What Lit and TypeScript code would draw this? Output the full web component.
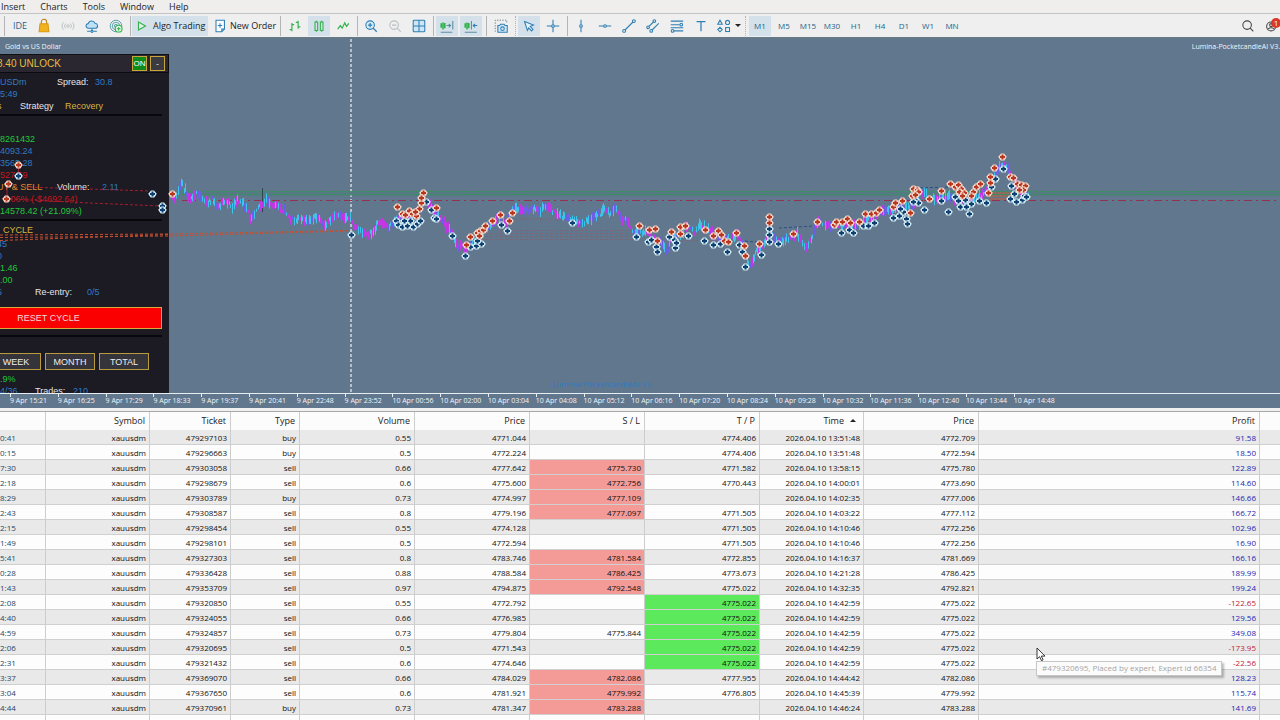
import { LitElement, html, css, svg } from "lit";
import { customElement } from "lit/decorators.js";
import { classMap } from "lit/directives/class-map.js";

type Pt = [number, number];

const BLUE = "#2f7fb4";
const GREEN = "#2fb24a";

const pairs = (s: string): Pt[] =>
  s.trim().split(/\s+/).map((p) => p.split(",").map(Number) as Pt);

const PRICE = pairs(`172,199 175,200 181,184 185,190 189,197 194,194 200,196 206,203 212,200 217,207 223,203
229,202 231,208 237,200 243,204 250,217 257,209 262,205 266,200 272,205 278,207 285,212 291,220 300,217
308,222 315,217 325,225 335,216 344,218 350,216 353,224 358,231 365,233 372,234 379,220 387,228 393,223
400,217 408,220 418,212 423,200 430,205 440,218 450,231 457,246 463,247 467,250 472,243 478,240 485,230
495,222 502,214 506,224 511,210 518,210 524,211 532,208 540,210 545,205 552,211 560,216 567,216 573,222
585,222 595,217 604,210 609,213 616,208 621,219 628,222 634,233 641,231 650,235 656,240 660,243 667,251
671,237 682,233 688,225 694,231 700,225 712,233 720,238 730,240 736,233 743,246 749,268 753,258 758,248
765,243 770,230 777,243 787,238 797,234 806,247 811,240 817,223 825,224 835,227 845,224 855,226 865,220
875,215 885,212 895,208 905,207 912,205 920,192 930,198 940,198 950,196 960,203 970,200 980,197 990,188
995,172 1003,165 1008,170 1012,178 1020,190 1028,193`);

const SELLS = pairs(`18,165 8,184 6,199 172,194 397,207 402,214 405,215 409,211 412,214 416,216 419,209
421,203 423,193 421,198 415,212 436,208 466,245 470,237 477,233 480,231 483,230 479,236 485,226 492,221
500,215 509,221 512,213 639,226 649,230 655,229 657,241 671,232 680,227 685,226 680,234 705,230 713,236
718,231 721,235 724,241 728,242 736,233 744,246 745,256 769,217 769,223 759,244 793,234 817,222 834,225
836,222 842,222 847,219 850,223 859,222 865,214 871,214 876,213 879,210 893,207 895,203 902,201 910,213
913,189 917,190 918,192 912,196 915,195 929,199 941,191 950,184 955,187 958,185 961,189 959,192 964,193
962,196 973,192 976,187 980,184 971,196 988,193 990,177 994,168 1002,157 990,183 1010,177 1013,178
1017,184 1021,185 1025,186 1023,190 1019,190`);

const BUYS = pairs(`18,176 152,194 162,206 162,210 351,235 396,221 398,225 402,227 407,226 413,227 417,224
420,221 410,221 404,221 426,202 431,210 434,218 436,219 452,236 465,256 470,247 476,246 481,244 477,241
501,225 507,231 572,223 636,237 648,242 651,240 656,247 657,252 675,248 674,240 669,237 676,243 688,236
704,241 713,245 720,244 727,252 739,245 742,252 745,267 769,229 769,235 769,242 761,255 778,244 841,233
849,230 853,233 863,226 868,226 874,223 893,218 899,216 903,212 906,219 907,224 900,209 915,200 918,203
913,202 924,210 941,201 948,212 955,197 958,201 960,207 966,207 969,214 971,204 979,201 986,203 965,200
995,179 1003,169 991,187 1011,186 1010,199 1016,202 1022,200 1024,196 1014,194 1026,197`);

/* Deterministic noise keeps the candles identical on every render. */
function candles() {
  let seed = 11;
  const rnd = () => ((seed = (seed * 16807) % 2147483647) / 2147483647);
  const tone = ["#c436e6", "#3ec3ea", "#6a5fe6"];
  const groups: string[] = ["", "", ""];
  let k = 0;
  for (let x = 172; x <= 1028; x += 1) {
    while (k < PRICE.length - 2 && PRICE[k + 1][0] < x) k++;
    const [x0, y0] = PRICE[k];
    const [x1, y1] = PRICE[k + 1];
    const y = y0 + ((y1 - y0) * (x - x0)) / (x1 - x0) + (rnd() - 0.5) * 5;
    const h = 1.5 + rnd() * 4;
    const r = rnd();
    const slope = y1 - y0;
    const c = r < 0.25 ? 2 : r < (slope > 0 ? 0.78 : 0.5) ? 0 : 1;
    groups[c] += `M${x + 0.5} ${(y - h).toFixed(1)}V${(y + h).toFixed(1)}`;
  }
  return groups.map((d, i) => svg`<path d=${d} stroke=${tone[i]} stroke-width="1" fill="none"/>`);
}

const marker = (fill: string, ring: string) => ([x, y]: Pt) => svg`
  <g transform="translate(${x + 0.5} ${y})">
    <path d="M-1.500-3.500H1.500L3.800-.8V.8L1.800 3.500H-1.800L-3.800.8V-.8Z" fill=${ring}/>
    <path d="M-1-2.400H1V-1H2.500V1H1V2.400H-1V1H-2.500V-1H-1Z" fill=${fill}/>
  </g>`;

const TIMES = ["9 Apr 15:21", "9 Apr 16:25", "9 Apr 17:29", "9 Apr 18:33", "9 Apr 19:37", "9 Apr 20:41",
  "9 Apr 22:48", "9 Apr 23:52", "10 Apr 00:56", "10 Apr 02:00", "10 Apr 03:04", "10 Apr 04:08",
  "10 Apr 05:12", "10 Apr 06:16", "10 Apr 07:20", "10 Apr 08:24", "10 Apr 09:28", "10 Apr 10:32",
  "10 Apr 11:36", "10 Apr 12:40", "10 Apr 13:44", "10 Apr 14:48"];

/* open time | ticket | type | volume | price | S/L | T/P | close time | close price | profit */
const DEALS = `0:41|479297103|buy|0.55|4771.044||4774.406|13:51:48|4772.709|91.58
0:15|479296663|buy|0.5|4772.224||4774.406|13:51:48|4772.594|18.50
7:30|479303058|sell|0.66|4777.642|4775.730*|4771.582|13:58:15|4775.780|122.89
2:18|479298679|sell|0.6|4775.600|4772.756*|4770.443|14:00:01|4773.690|114.60
8:29|479303789|buy|0.73|4774.997|4777.109*||14:02:35|4777.006|146.66
2:43|479308587|sell|0.8|4779.196|4777.097*|4771.505|14:03:22|4777.112|166.72
2:15|479298454|sell|0.55|4774.128||4771.505|14:10:46|4772.256|102.96
1:49|479298101|sell|0.5|4772.594||4771.505|14:10:46|4772.256|16.90
5:41|479327303|sell|0.8|4783.746|4781.584*|4772.855|14:16:37|4781.669|166.16
0:28|479336428|sell|0.88|4788.584|4786.425*|4773.673|14:21:28|4786.425|189.99
1:43|479353709|sell|0.97|4794.875|4792.548*|4775.022|14:32:35|4792.821|199.24
2:08|479320850|sell|0.55|4772.792||4775.022*|14:42:59|4775.022|-122.65
4:40|479324055|sell|0.66|4776.985||4775.022*|14:42:59|4775.022|129.56
4:59|479324857|sell|0.73|4779.804|4775.844|4775.022*|14:42:59|4775.022|349.08
2:06|479320695|sell|0.5|4771.543||4775.022*|14:42:59|4775.022|-173.95
2:31|479321432|sell|0.6|4774.646||4775.022*|14:42:59|4775.022|-22.56
3:37|479369070|sell|0.66|4784.029|4782.086*|4777.955|14:44:42|4782.086|128.23
3:04|479367650|sell|0.6|4781.921|4779.992*|4776.805|14:45:39|4779.992|115.74
4:44|479370961|buy|0.73|4781.347|4783.288*||14:46:24|4783.288|141.69
2:37|479367350|sell|0.55|4780.364||4776.805|14:48:08|4778.814|85.25`
  .split("\n").map((r) => r.split("|"));

const FRAMES = ["M1", "M5", "M15", "M30", "H1", "H4", "D1", "W1", "MN"];

const icon = (body: unknown) => html`<svg class="ico" viewBox="0 0 18 18" fill="none"
  stroke=${BLUE} stroke-width="1.2" aria-hidden="true">${body}</svg>`;

const I = {
  bag: svg`<path d="M6 7V4.5a3 3 0 0 1 6 0V7" stroke="#b98413"/><path d="M4.5 6.5h9l1 9h-11z" fill="#f2b21d" stroke="#d99a14"/>`,
  signal: svg`<g stroke="#b9bdc0" stroke-width="1"><circle cx="9" cy="9" r="1.4"/><path d="M6.3 6.3a4 4 0 0 0 0 5.4M11.7 6.3a4 4 0 0 1 0 5.4M4 4.8a6 6 0 0 0 0 8.4M14 4.8a6 6 0 0 1 0 8.4"/></g>`,
  cloud: svg`<path d="M5 11.5a2.6 2.6 0 0 1-.2-5.2A4 4 0 0 1 12.4 6a2.8 2.8 0 0 1 .8 5.5z" fill="#bfe0f5"/><path d="M9 11.5V15M3.5 15h4M10.500 15h4"/><circle cx="9" cy="15" r="1.200"/>`,
  radar: svg`<g stroke="#4f9aa8" stroke-width="1"><circle cx="9" cy="9" r="6.500"/><circle cx="9" cy="9" r="4.200"/><circle cx="9" cy="9" r="1.800"/></g><circle cx="12" cy="12" r="3.800" fill="#e6f7e8" stroke=${GREEN}/><path d="M12 10v4M10 12h4" stroke=${GREEN}/>`,
  play: svg`<path d="M5 4.500L13 9 5 13.500Z" stroke=${GREEN} fill="#e2f4e8"/>`,
  order: svg`<path d="M4.500 2.500h9.500v10l-3 3h-6.500z" fill="#fff"/><path d="M14 12.500h-3v3" /><path d="M9 6v5M6.500 8.500h5"/>`,
  bars: svg`<path d="M5.500 5.500V15M3 13h2.500M5.500 7.500H8M12.500 3v9M10 5h2.500M12.500 10H15" stroke=${GREEN} stroke-width="1.300"/>`,
  candle: svg`<g stroke=${GREEN}><rect x="4.500" y="4.500" width="3" height="9.500"/><rect x="10.500" y="4.500" width="3" height="9.500"/><path d="M6 3v1.500M6 14v1.500M12 3v1.500M12 14v1.500"/></g>`,
  line: svg`<path d="M3 12.500L6 8.500 8 11.500 11 5.500 13 9.500 15.500 6" stroke=${GREEN} stroke-width="1.300"/>`,
  plus: svg`<circle cx="8" cy="8" r="4.800" fill="#d7ecf9"/><path d="M11.500 11.500L15.500 15.500M8 5.700V10.300M5.700 8H10.300" stroke-width="1.400"/>`,
  minus: svg`<g stroke="#b9bec2"><circle cx="8" cy="8" r="4.800"/><path d="M11.500 11.500L15.500 15.500M5.700 8H10.300"/></g>`,
  grid: svg`<rect x="2.500" y="2.500" width="13" height="13" rx="1" fill="#cfe6f6"/><path d="M9 2.500v13M2.500 9h13"/>`,
  shift: svg`<path d="M2.500 6v5M4.500 5v8M6.500 5.500v6" stroke=${GREEN} stroke-width="1.800"/><path d="M8.500 8.500h4.500M11 6.500l2 2-2 2" stroke="#4f8f9f"/><path d="M15.500 3.500V13M2 16h13" stroke="#5d8ca0"/>`,
  scroll: svg`<path d="M2.500 6v5M4.500 5v8M6.500 5.500v6" stroke=${GREEN} stroke-width="1.800"/><path d="M9.500 3.500V13M2 16h13.500" stroke="#5d8ca0"/><path d="M16 8.500h-4.500M13.500 6.500l-2 2 2 2"/>`,
  camera: svg`<path d="M2.500 15.500V2.500h13v4" stroke="#667a86" stroke-width="1" stroke-dasharray="1.500 1.500"/><path d="M5.500 8.500h2l1-1.500h4l1 1.500h2.500v7.500h-10.500z" fill="#d2e8f7"/><circle cx="10.700" cy="12" r="2"/>`,
  cursor: svg`<path d="M4 4L14 8 10.400 9.500 13.500 12.800 11.800 14.500 8.700 11.200 7.200 14Z" fill="#e5f2fb"/>`,
  cross: svg`<path d="M9 2v5.500M9 10.500V16M2 9h5.500M10.500 9H16"/><circle cx="9" cy="9" r="1.500"/>`,
  vline: svg`<path d="M9 2v5.500M9 10.500V16"/><circle cx="9" cy="9" r="1.500"/>`,
  hline: svg`<path d="M2 9h5.500M10.500 9H16"/><circle cx="9" cy="9" r="1.500"/>`,
  trend: svg`<path d="M4.500 13.500l9-9"/><circle cx="3.500" cy="14.500" r="1.600"/><circle cx="14.500" cy="3.500" r="1.600"/>`,
  channel: svg`<path d="M4.500 9.500l5-5M8 13.500l7.500-7.500"/><circle cx="3.500" cy="10.500" r="1.500"/><circle cx="10.500" cy="3.500" r="1.500"/><circle cx="7" cy="14.500" r="1.500"/>`,
  fibo: svg`<path d="M2 3.500h14M2 7.500h10M2 11h14M5.500 14.500H16"/><circle cx="13.800" cy="7.500" r="1.500"/><circle cx="4" cy="14.500" r="1.500"/>`,
  text: svg`<path d="M4 4h10M9 4v11" stroke-width="1.400"/>`,
  shapes: svg`<path d="M4.500 2.500L7 7h-5z"/><circle cx="13" cy="5" r="2.300"/><path d="M4.500 10.500L7 13l-2.500 2.500L2 13z"/><rect x="10.800" y="10.800" width="4.400" height="4.400"/>`,
  search: svg`<circle cx="8" cy="8" r="4.800" stroke="#444"/><path d="M11.500 11.500L15 15" stroke="#444"/>`,
  account: svg`<circle cx="8" cy="9.500" r="5" stroke="#444"/><circle cx="8" cy="8" r="1.700" stroke="#444"/><path d="M4.500 12.500q3.500-3 7 0" stroke="#444"/>`,
};

@customElement("app-root")
export class AppRoot extends LitElement {
  static styles = css`
    :host { display: flex; flex-direction: column; position: relative; height: 100vh; overflow: hidden;
      background: #f0f0f0; color: #222; font: 9px/12px "Open Sans", "Noto Sans", sans-serif; }
    * { box-sizing: border-box; }
    button { font: inherit; color: inherit; border: 0; background: none; padding: 0; margin: 0; }
    .menu { display: flex; gap: 15px; height: 13px; padding-left: 1px; flex: none; background: #efeeed; }
    .bar { display: flex; align-items: center; height: 26px; flex: none; background: #eeefee; overflow: hidden;
      border-top: 1px solid #c4c4c4; border-bottom: 2px solid #647888; }
    .tool { width: 24px; height: 20px; flex: none; display: flex; align-items: center; justify-content: center;
      color: #1f628c; }
    .tool.on, .algo { background: #d5e1ea; background-clip: padding-box; border: 0 solid transparent; }
    .tool.on { border-width: 0 1px; }
    .tool.tf { font-size: 8px; }
    .ico { width: 16px; height: 16px; flex: none; }
    .algo, .new { height: 20px; display: flex; align-items: center; flex: none; white-space: nowrap; }
    .algo { width: 76px; padding-left: 2px; gap: 3px; }
    .new { width: 69px; padding-left: 4px; gap: 2px; }
    .tool.more { width: 30px; gap: 3px; }
    .caret { border: 3px solid transparent; border-top-color: #222; border-bottom: 0; }
    .sep { flex: none; height: 20px; display: flex; justify-content: center; width: 4px; }
    .sep::before { content: ""; border-left: 1px solid #b4b4b4; }
    .sep.w5 { width: 5px; }
    .sep.w6 { width: 6px; }
    .sep.w8 { width: 8px; }
    .sep.dot::before { border-left-style: dotted; }
    .grow { flex: 1; }
    .acct { position: relative; margin-right: -4px; }
    .badge { position: absolute; right: 3px; top: 2px; width: 10px; height: 10px; border-radius: 5px;
      background: #d8392b; color: #fff; font-size: 8px; line-height: 10px; text-align: center; }
    .chart { position: relative; flex: none; height: 354px; background: #61778d; overflow: hidden; }
    .caption { display: flex; justify-content: space-between; height: 15px; padding-left: 5px; color: #f2f5f8;
      font-size: 7px; line-height: 15px; white-space: nowrap; }
    .plot { position: absolute; inset: 0; width: 100%; height: 100%; pointer-events: none; }
    .panel { width: 169px; height: 339px; overflow: hidden; background: #1c1a23; color: #e6e6e6;
      font: 9px/12px "Liberation Sans", Arial, sans-serif; border-top: 1px solid #111; }
    .head { display: flex; align-items: center; height: 18px; gap: 3px; padding-right: 3px; background: #2a2730;
      border-bottom: 1px solid #0c0b10; border-right: 1px solid #0c0b10; color: #e6bd3f; }
    .head h1 { flex: 1; margin: 0 0 0 -3px; font-size: 10px; font-weight: 400; white-space: nowrap; }
    .head button { width: 15px; height: 15px; border: 1px solid #c9a63c; background: #3a3a40; color: #ddd; line-height: 12px; }
    .head .live { background: #118a1c; color: #fff; font-size: 8px; }
    .row { display: flex; height: 12px; white-space: nowrap; }
    .rows { padding: 3px 0 2px; }
    .rule { width: 162px; height: 2px; background: #08070c; }
    .c20 { width: 20px; } .c35 { width: 35px; } .c38 { width: 38px; } .c45 { width: 45px; }
    .c52 { width: 52px; } .c57 { width: 57px; }
    .b { color: #2f7cc4; } .g { color: #22c93a; } .y { color: #d8b43c; } .o { color: #e08a2c; } .r { color: #c4161c; }
    .ind { padding-left: 3px; }
    .cut { text-indent: -3px; }
    .stats { padding: 17px 0 2px; }
    .cycle { padding: 3px 0 0; }
    .cycle .first { margin-bottom: 2px; }
    .reset { display: block; width: 162px; height: 22px; margin: 9px 0 6px; padding-right: 64px; background: #fb0000;
      border: 1px solid #d9a93a; border-left: 0; color: #f3dada; }
    .periods { display: flex; gap: 4px; margin: 16px 0 3px; }
    .periods button { width: 50px; height: 17px; background: #35343b; border: 1px solid #b89b3f; color: #eee; }
    .periods button:first-child { width: 41px; border-left: 0; padding-right: 8px; }
    .axis { flex: none; height: 15px; background: #61778d; border-top: 1px solid #e8edf1; padding-left: 10px; }
    .ticks { display: grid; grid-template-columns: repeat(22, 1fr); width: 82.8%; color: #f2f5f8; font-size: 7px;
      line-height: 13px; white-space: nowrap; }
    .ticks span { position: relative; }
    .ticks span::before { content: ""; position: absolute; left: 0; top: 0; height: 3px; border-left: 1px solid #e8edf1; }
    .deals { flex: 1; min-height: 0; overflow: hidden; border-top: 3px solid #f0f0f0; background: #fdfdfd; }
    table { width: 100%; table-layout: fixed; border-collapse: separate; border-spacing: 0; border-top: 1px solid #a8a8a8; }
    th, td { padding: 0 3px 0 0; text-align: right; border-right: 1px solid #cdcdcd; white-space: nowrap; overflow: hidden; }
    th { height: 18px; padding-right: 4px; font-weight: 400; background: #fcfcfc; }
    td { height: 15px; padding-top: 2px; line-height: 12px; border-bottom: 1px solid #d0d0d0; font-size: 8px; color: #111; }
    td.start { text-align: left; color: #29455f; }
    tbody tr:nth-child(odd) { background: #e9e9e9; }
    td.sl { background: #f49b97; }
    td.tp { background: #5cea5c; }
    td.up { color: #2226b0; }
    td.down { color: #c02434; }
    td:last-child, th:last-child { border-right: 0; }
    .sort { display: inline-block; margin: 0 3px 2px 6px; border: 3px solid transparent; border-bottom-color: #222; border-top: 0; }
    .w46 { width: 46px; } .w104 { width: 104px; } .w81 { width: 81px; } .w69 { width: 69px; } .w115 { width: 115px; }
    .w20 { width: 20px; }
    .pointer { position: absolute; left: 1036px; top: 647px; width: 10px; height: 15px; }
    .tip { position: absolute; left: 1036px; top: 661px; padding: 0 5px; height: 15px; background: #fbfbfb;
      border: 1px solid #c6c6c6; box-shadow: 2px 2px 2px #0004; color: #a6a6a6; font-size: 8px; line-height: 12px; white-space: nowrap; }
  `;

  private tool(name: string, label: string, on = false) {
    return html`<button class=${classMap({ tool: true, on })} aria-label=${label}>${icon((I as any)[name])}</button>`;
  }

  private toolbar() {
    return html`<div class="bar" role="toolbar">
      <span class="sep w8"></span>
      <button class="tool">IDE</button>
      ${this.tool("bag", "Market")}${this.tool("signal", "Signals")}${this.tool("cloud", "VPS")}${this.tool("radar", "Copy")}
      <span class="sep"></span>
      <button class="algo">${icon(I.play)}Algo Trading</button>
      <button class="new">${icon(I.order)}New Order</button>
      <span class="sep w6"></span>
      ${this.tool("bars", "Bars")}${this.tool("candle", "Candles", true)}${this.tool("line", "Line")}
      <span class="sep"></span>
      ${this.tool("plus", "Zoom in")}${this.tool("minus", "Zoom out")}${this.tool("grid", "Tile")}
      <span class="sep"></span>
      ${this.tool("shift", "Shift end", true)}${this.tool("scroll", "Auto scroll", true)}
      <span class="sep w6"></span>
      ${this.tool("camera", "Screenshot")}
      <span class="sep dot"></span>
      ${this.tool("cursor", "Cursor", true)}${this.tool("cross", "Crosshair")}
      <span class="sep"></span>
      ${this.tool("vline", "Vertical line")}${this.tool("hline", "Horizontal line")}${this.tool("trend", "Trendline")}
      ${this.tool("channel", "Channel")}${this.tool("fibo", "Fibonacci")}${this.tool("text", "Text")}
      <button class="tool more" aria-label="Shapes">${icon(I.shapes)}<span class="caret"></span></button>
      <span class="sep dot w5"></span>
      ${FRAMES.map((f, i) => html`<button class=${classMap({ tool: true, tf: true, on: i === 0 })}>${f}</button>`)}
      <span class="grow"></span>
      ${this.tool("search", "Search")}
      <button class="tool acct" aria-label="Account">${icon(I.account)}<span class="badge">1</span></button>
    </div>`;
  }

  private panel() {
    return html`<section class="panel">
      <div class="head"><h1>3.40 UNLOCK</h1><button class="live">ON</button><button>-</button></div>
      <div class="rows">
        <div class="row"><span class="b c57">USDm</span><span class="c38">Spread:</span><span class="b">30.8</span></div>
        <div class="row b">5:49</div>
        <div class="row"><span class="y c20 cut">s</span><span class="c45">Strategy</span><span class="y">Recovery</span></div>
      </div>
      <div class="rule"></div>
      <div class="rows stats">
        <div class="row g">8261432</div>
        <div class="row b">4093.24</div>
        <div class="row b">3565.28</div>
        <div class="row r">527.69</div>
        <div class="row"><span class="o c57 cut">UY &amp; SELL</span><span class="c45">Volume:</span><span class="b">2.11</span></div>
        <div class="row r ind">1.06% (-$4692.64)</div>
        <div class="row g">14578.42 (+21.09%)</div>
      </div>
      <div class="rule"></div>
      <div class="cycle">
        <div class="row y ind first">CYCLE</div>
        <div class="row b cut">45</div>
        <div class="row b cut">0</div>
        <div class="row g">1.46</div>
        <div class="row g">.00</div>
        <div class="row"><span class="b c35 cut">5</span><span class="c52">Re-entry:</span><span class="b">0/5</span></div>
      </div>
      <button class="reset">RESET CYCLE</button>
      <div class="rule"></div>
      <div class="periods"><button>WEEK</button><button>MONTH</button><button>TOTAL</button></div>
      <div class="row g">.9%</div>
      <div class="row"><span class="b c35">4/36</span><span class="c38">Trades:</span><span class="b">210</span></div>
    </section>`;
  }

  private plot() {
    return html`<svg class="plot" viewBox="0 39 1280 354" preserveAspectRatio="xMinYMin slice" aria-hidden="true" fill="none">
      <path d="M351 39V393" stroke="#d2dae2" stroke-width="1.500" stroke-dasharray="3 2"/>
      <path d="M182 193.500H1280" stroke="#4b7d7c" stroke-width="5" stroke-opacity=".5"/>
      <path d="M182 191.500H1280M182 194.500H1280" stroke="#2f9a52" stroke-opacity=".8" stroke-dasharray="4 2"/>
      <path d="M182 200.500H1280" stroke="#96304e" stroke-dasharray="8 4 2 4"/>
      <g stroke="#c8502f" stroke-dasharray="3 2" stroke-width="1">
        <path d="M0 235L170 234 350 230.500M0 237.500L170 236 350 231M0 240.500L170 234.500"/></g>
      <g stroke="#8d5c66" stroke-opacity=".6" stroke-dasharray="3 2">
        <path d="M480 233.500H640M485 236.500H640M480 239.500H640M515 218.500L600 221M500 230.500H640M680 240.500H735"/></g>
      <path d="M25 187L150 191M10 199L90 203 160 206" stroke="#a31f2e" stroke-dasharray="3 2"/>
      <path d="M18.500 167V174M7 185V198" stroke="#a31f2e"/>
      <path d="M779 228L815 226M745 241L765 243M915 188L950 187" stroke="#2b4f86" stroke-dasharray="3 2"/>
      <path d="M262.500 188V212" stroke="#2c4653"/>
      <path d="M990 193H1014M988 196H1012M990 199H1010" stroke="#cf5f35" stroke-dasharray="3 1"/>
      ${candles()}
      ${BUYS.map(marker("#0d3f70", "#d3ecf5"))}
      ${SELLS.map(marker("#b8351f", "#f6d9cb"))}
      <text x="552" y="387" fill="#2c7cc8" font-size="8" font-family="Open Sans, sans-serif">Lumina-PocketcandleAI V3.</text>
    </svg>`;
  }

  render() {
    return html`
      <nav class="menu">${["Insert", "Charts", "Tools", "Window", "Help"].map((m) => html`<button>${m}</button>`)}</nav>
      ${this.toolbar()}
      <main class="chart">
        <div class="caption"><span>Gold vs US Dollar</span><span>Lumina-PocketcandleAI V3.</span></div>
        ${this.panel()}${this.plot()}
      </main>
      <div class="axis"><div class="ticks">${TIMES.map((t) => html`<span>${t}</span>`)}</div></div>
      <section class="deals"><table>
        <colgroup><col class="w46"><col class="w104"><col class="w81"><col class="w69"><col class="w115"><col class="w115">
          <col class="w115"><col class="w115"><col class="w104"><col class="w115"><col><col class="w20"></colgroup>
        <thead><tr><th></th><th>Symbol</th><th>Ticket</th><th>Type</th><th>Volume</th><th>Price</th><th>S / L</th>
          <th>T / P</th><th>Time<span class="sort"></span></th><th>Price</th><th>Profit</th><th></th></tr></thead>
        <tbody>${DEALS.map(([open, ticket, type, vol, price, sl, tp, time, close, profit]) => html`<tr>
          <td class="start">${open}</td><td>xauusdm</td><td>${ticket}</td><td>${type}</td>
          <td>${vol}</td><td>${price}</td>
          <td class=${classMap({ sl: sl.endsWith("*") })}>${sl.replace("*", "")}</td>
          <td class=${classMap({ tp: tp.endsWith("*") })}>${tp.replace("*", "")}</td>
          <td>2026.04.10 ${time}</td><td>${close}</td>
          <td class=${profit.startsWith("-") ? "down" : "up"}>${profit}</td><td></td></tr>`)}</tbody>
      </table></section>
      <svg class="pointer" viewBox="0 0 10 15" aria-hidden="true"><path d="M1 1v11l2.600-2.300 1.900 4 1.600-.8-1.800-3.800H9z" fill="#fff" stroke="#222" stroke-width=".9"/></svg>
      <div class="tip" role="tooltip">#479320695, Placed by expert, Expert id 66354</div>`;
  }
}
